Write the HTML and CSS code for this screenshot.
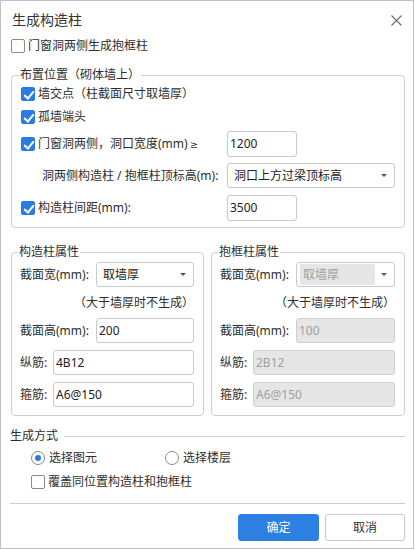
FILE: index.html
```html
<!DOCTYPE html>
<html lang="zh">
<head>
<meta charset="utf-8">
<title>生成构造柱</title>
<link rel="stylesheet" href="styles.css">
</head>
<body>
<div class="dialog">
  <div class="titlebar">
    <span class="title">生成构造柱</span>
    <svg class="close" width="11" height="11" viewBox="0 0 11 11"><path d="M0.5 0.5 L10.5 10.5 M10.5 0.5 L0.5 10.5" stroke="#6b6b6b" stroke-width="1.1" fill="none"/></svg>
  </div>

  <div class="opt top-opt"><span class="cb"></span><span>门窗洞两侧生成抱框柱</span></div>

  <fieldset class="fs fs-place">
    <legend>布置位置（砌体墙上）</legend>
    <div class="place-grid">
      <div class="opt span2 r1"><span class="cb on"></span><span>墙交点（柱截面尺寸取墙厚）</span></div>
      <div class="opt span2 r2"><span class="cb on"></span><span>孤墙端头</span></div>
      <div class="opt r3"><span class="cb on"></span><span>门窗洞两侧，洞口宽度(mm)<span class="ge">≥</span></span></div>
      <div class="field w70 r3">1200</div>
      <div class="lab indent r4">洞两侧构造柱 / 抱框柱顶标高(m):</div>
      <div class="select wide r4"><span>洞口上方过梁顶标高</span><i class="arrow"></i></div>
      <div class="opt r5"><span class="cb on"></span><span>构造柱间距(mm):</span></div>
      <div class="field w70 r5">3500</div>
    </div>
  </fieldset>

  <div class="props">
    <fieldset class="fs fs-prop">
      <legend>构造柱属性</legend>
      <div class="prow"><span class="lab l76">截面宽(mm):</span><div class="select grow"><span>取墙厚</span><i class="arrow"></i></div></div>
      <div class="note">（大于墙厚时不生成）</div>
      <div class="prow"><span class="lab l76">截面高(mm):</span><div class="field grow">200</div></div>
      <div class="prow gap"><span class="lab l33">纵筋:</span><div class="field grow">4B12</div></div>
      <div class="prow gap"><span class="lab l33">箍筋:</span><div class="field grow">A6@150</div></div>
    </fieldset>
    <fieldset class="fs fs-prop fs-right">
      <legend>抱框柱属性</legend>
      <div class="prow"><span class="lab l76">截面宽(mm):</span><div class="select grow disabled"><span class="inner">取墙厚</span><i class="arrow"></i></div></div>
      <div class="note">（大于墙厚时不生成）</div>
      <div class="prow"><span class="lab l76">截面高(mm):</span><div class="field grow disabled">100</div></div>
      <div class="prow gap"><span class="lab l33">纵筋:</span><div class="field grow disabled">2B12</div></div>
      <div class="prow gap"><span class="lab l33">箍筋:</span><div class="field grow disabled">A6@150</div></div>
    </fieldset>
  </div>

  <div class="section-head"><span>生成方式</span><span class="hline"></span></div>
  <div class="radios">
    <div class="opt radio-opt first"><span class="radio on"></span><span>选择图元</span></div>
    <div class="opt radio-opt"><span class="radio"></span><span>选择楼层</span></div>
  </div>
  <div class="opt cover-opt"><span class="cb"></span><span>覆盖同位置构造柱和抱框柱</span></div>

  <div class="sep"></div>
  <div class="buttons">
    <div class="btn primary">确定</div>
    <div class="btn">取消</div>
  </div>
</div>
</body>
</html>
```

FILE: styles.css
```css
* { box-sizing: border-box; }
html, body { margin: 0; padding: 0; background: #fff; }
body {
  font-family: "Noto Sans", "Noto Sans CJK SC", sans-serif;
  font-size: 12px;
  line-height: 16px;
  color: #2e2e2e;
}
.dialog {
  width: 414px;
  height: 549px;
  border: 1px solid #c2c2c2;
  background: #fff;
  display: flex;
  flex-direction: column;
}
.titlebar {
  height: 38px;
  flex: none;
  display: flex;
  align-items: center;
  justify-content: space-between;
  padding: 0 11px 0 11px;
}
.title { font-size: 14px; color: #333; }
.close { display: block; }

.opt { display: flex; align-items: center; gap: 3px; white-space: nowrap; }
.ge { font-family: "DejaVu Sans", sans-serif; font-size: 10px; margin-left: 2px; }
.cb {
  width: 14px; height: 14px; flex: none;
  border: 1px solid #8a8a8a; border-radius: 2px; background: #fff;
  position: relative;
}
.cb.on { background: #2b7ce0; border-color: #2b7ce0; }
.cb.on::after {
  content: ""; position: absolute;
  left: 4px; top: 1px; width: 4px; height: 8px;
  border-right: 2px solid #fff; border-bottom: 2px solid #fff;
  transform: rotate(40deg);
}
.top-opt { height: 14px; margin-left: 10px; flex: none; }

.fs {
  border: 1px solid #cdcdcd;
  border-radius: 4px;
  margin: 0;
  min-width: 0;
}
.fs legend {
  padding: 0 1px;
  margin-left: -2px;
  line-height: 16px;
  color: #2e2e2e;
}
.fs-place {
  margin: 14px 8px 0 10px;
  padding: 0 9px 6px 9px;
  flex: none;
}
.place-grid {
  display: grid;
  grid-template-columns: 206px 1fr;
  align-items: center;
}
.span2 { grid-column: 1 / 3; }
.r1 { height: 22px; }
.r2 { height: 24px; }
.r3 { margin-top: 2px; }
.r4 { margin-top: 6px; }
.r5 { margin-top: 7px; }
.indent { padding-left: 21px; }
.lab { white-space: nowrap; }

.field {
  height: 26px;
  border: 1px solid #c9c9c9;
  border-radius: 3px;
  padding: 0 2px;
  display: flex; align-items: center;
  color: #222;
  font-size: 12px;
  background: #fff;
}
.w70 { width: 70px; }
.select {
  height: 25px;
  border: 1px solid #c9c9c9;
  border-radius: 3px;
  padding: 0 7px 0 6px;
  display: flex; align-items: center; justify-content: space-between;
  color: #222;
  background: #fff;
}
.wide { width: 168px; }
.arrow {
  width: 0; height: 0;
  border-left: 3px solid transparent;
  border-right: 3px solid transparent;
  border-top: 3px solid #555;
}

.props {
  display: flex;
  gap: 7px;
  margin: 16px 8px 0 10px;
  flex: none;
}
.fs-prop {
  width: 193px;
  padding: 2px 9px 8px 8px;
}
.fs-right { width: 194px; }
.prow { display: flex; align-items: center; height: 25px; }
.prow.gap { margin-top: 7px; }
.l76 { width: 76px; flex: none; }
.l33 { width: 33px; flex: none; }
.grow { flex: 1; min-width: 0; height: 25px; }
.note {
  height: 31px;
  display: flex; align-items: center; justify-content: flex-end;
  white-space: nowrap;
}
.field.disabled { background: #e6e6e6; color: #a0a0a0; border-color: #cfcfcf; }
.select.disabled { padding: 1px 7px 1px 3px; }
.select.disabled .inner {
  flex: 1; align-self: stretch;
  background: #e6e6e6; color: #a0a0a0;
  border-radius: 2px;
  margin-right: 6px;
  padding-left: 3px;
  display: flex; align-items: center;
}

.section-head {
  display: flex; align-items: center;
  margin: 12px 8px 0 9px;
  height: 16px;
  flex: none;
}
.hline { flex: 1; height: 1px; background: #cdcdcd; margin-left: 6px; }
.radios { display: flex; margin: 6px 0 0 30px; height: 16px; flex: none; }
.radio-opt { gap: 4px; }
.radio-opt.first { width: 134px; }
.radio {
  width: 14px; height: 14px; flex: none;
  border: 1px solid #8a8a8a; border-radius: 50%;
  background: #fff;
  display: flex; align-items: center; justify-content: center;
}
.radio.on::after {
  content: ""; width: 6px; height: 6px; border-radius: 50%; background: #2b7ce0;
}
.cover-opt { margin: 8px 0 0 30px; height: 16px; flex: none; }

.sep { height: 1px; background: #cdcdcd; margin: 13px 8px 0 9px; flex: none; }
.buttons {
  display: flex; justify-content: flex-end; gap: 6px;
  margin: 10px 8px 0 0;
  flex: none;
}
.btn {
  width: 80px; height: 27px;
  border: 1px solid #c9c9c9; border-radius: 3px;
  display: flex; align-items: center; justify-content: center;
  color: #333; background: #fff;
}
.btn.primary { width: 81px; background: #2d7fe1; border-color: #2d7fe1; color: #fff; }
```
